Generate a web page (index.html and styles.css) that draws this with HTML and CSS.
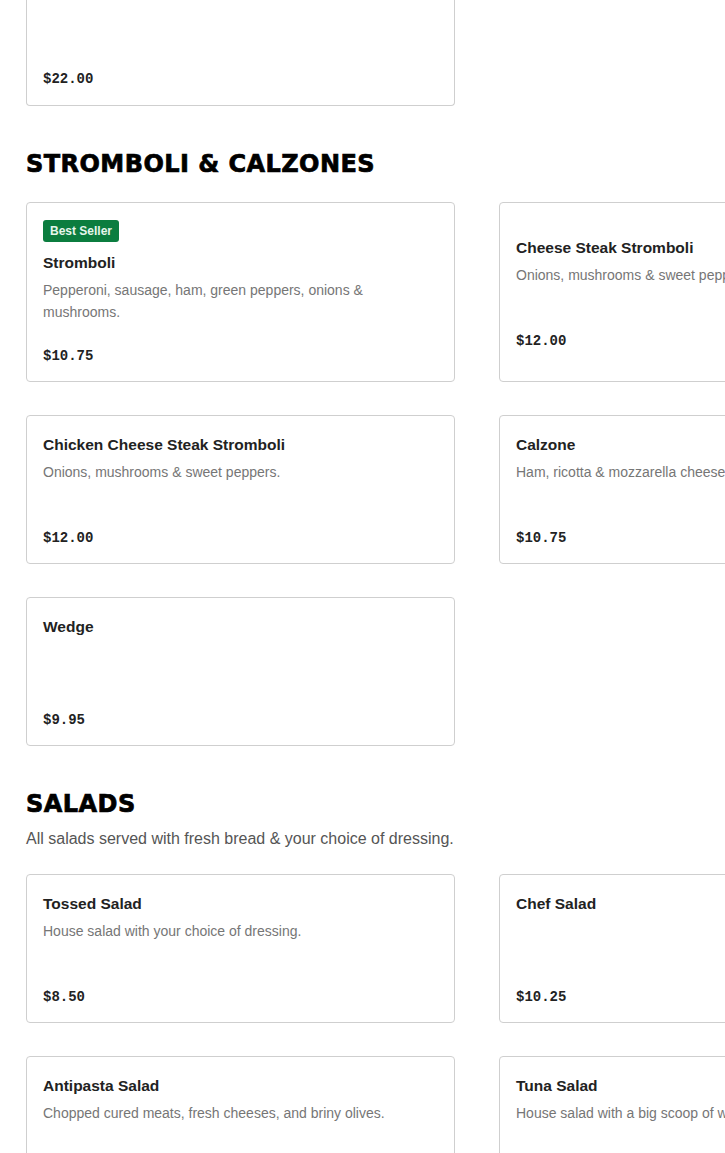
FILE: index.html
```html
<!DOCTYPE html>
<html lang="en">
<head>
    <meta charset="UTF-8" />
    <meta name="viewport" content="width=device-width, initial-scale=1">
    <title>Menu</title>
    <link rel="stylesheet" href="styles.css">
</head>
<body>
    <main class="menu">
        <!-- end of the previous section, scrolled past -->
        <div class="grid">
            <div class="card cut">
                <p class="price">$22.00</p>
            </div>
        </div>

        <section class="section">
            <div class="section-head">
                <h2>STROMBOLI &amp; CALZONES</h2>
            </div>
            <div class="grid">
                <div class="card">
                    <span class="badge">Best Seller</span>
                    <h3>Stromboli</h3>
                    <p class="desc">Pepperoni, sausage, ham, green peppers, onions &amp; mushrooms.</p>
                    <p class="price">$10.75</p>
                </div>
                <div class="card">
                    <h3>Cheese Steak Stromboli</h3>
                    <p class="desc">Onions, mushrooms &amp; sweet peppers.</p>
                    <p class="price">$12.00</p>
                </div>
                <div class="card">
                    <h3>Chicken Cheese Steak Stromboli</h3>
                    <p class="desc">Onions, mushrooms &amp; sweet peppers.</p>
                    <p class="price">$12.00</p>
                </div>
                <div class="card">
                    <h3>Calzone</h3>
                    <p class="desc">Ham, ricotta &amp; mozzarella cheese.</p>
                    <p class="price">$10.75</p>
                </div>
                <div class="card">
                    <h3>Wedge</h3>
                    <p class="desc"></p>
                    <p class="price">$9.95</p>
                </div>
            </div>
        </section>

        <section class="section">
            <div class="section-head">
                <h2>SALADS</h2>
                <p class="section-note">All salads served with fresh bread &amp; your choice of dressing.</p>
            </div>
            <div class="grid">
                <div class="card">
                    <h3>Tossed Salad</h3>
                    <p class="desc">House salad with your choice of dressing.</p>
                    <p class="price">$8.50</p>
                </div>
                <div class="card">
                    <h3>Chef Salad</h3>
                    <p class="desc"></p>
                    <p class="price">$10.25</p>
                </div>
                <div class="card">
                    <h3>Antipasta Salad</h3>
                    <p class="desc">Chopped cured meats, fresh cheeses, and briny olives.</p>
                    <p class="price">$11.50</p>
                </div>
                <div class="card">
                    <h3>Tuna Salad</h3>
                    <p class="desc">House salad with a big scoop of white albacore tuna.</p>
                    <p class="price">$11.50</p>
                </div>
            </div>
        </section>
    </main>
</body>
</html>
```

FILE: styles.css
```css
* { box-sizing: border-box; }
body {
    margin: 0;
    background: #fff;
    color: #222;
    font-family: "Liberation Sans", Arial, sans-serif;
    overflow-x: hidden;
}
.menu {
    width: 930px;
    padding: 0 0 40px 26px;
}
.grid {
    display: grid;
    grid-template-columns: 429px 429px;
    column-gap: 44px;
    row-gap: 33px;
}
.section {
    padding-top: 43px;
}
.section-head {
    display: flex;
    flex-direction: column;
    gap: 8px;
    margin-bottom: 23px;
}
.section-head h2 {
    margin: 0;
    font-family: "DejaVu Sans", sans-serif;
    font-weight: 700;
    font-size: 24px;
    letter-spacing: 0.45px;
    line-height: 30px;
    color: #000;
    -webkit-text-stroke: 0.7px #000;
}
.section-note {
    margin: 0;
    font-size: 16px;
    line-height: 24px;
    color: #555;
}

.card {
    border: 1px solid #cfcfcf;
    border-radius: 4px;
    padding: 17px 16px 15px;
    display: flex;
    flex-direction: column;
    justify-content: center;
    align-items: flex-start;
    background: #fff;
}
.card.cut {
    height: 106px;
    border-top: 0;
    border-radius: 0 0 4px 4px;
    justify-content: flex-end;
    padding-bottom: 16px;
}
.badge {
    background: #0b7d3f;
    color: #e6f6ec;
    font-size: 12px;
    font-weight: 700;
    line-height: 22px;
    padding: 0 7px;
    border-radius: 3px;
    margin-bottom: 9px;
}
.card h3 {
    margin: 0;
    font-size: 15.5px;
    font-weight: 700;
    line-height: 24px;
    color: #222;
}
.desc {
    margin: 4px 0 0;
    min-height: 44px;
    font-size: 14px;
    line-height: 22px;
    color: #767676;
    max-width: 355px;
}
.price {
    margin: 23px 0 0;
    font-family: "Liberation Mono", monospace;
    font-weight: 700;
    font-size: 14px;
    line-height: 20px;
    color: #222;
}
.card.cut .price {
    margin: 0;
}
```
